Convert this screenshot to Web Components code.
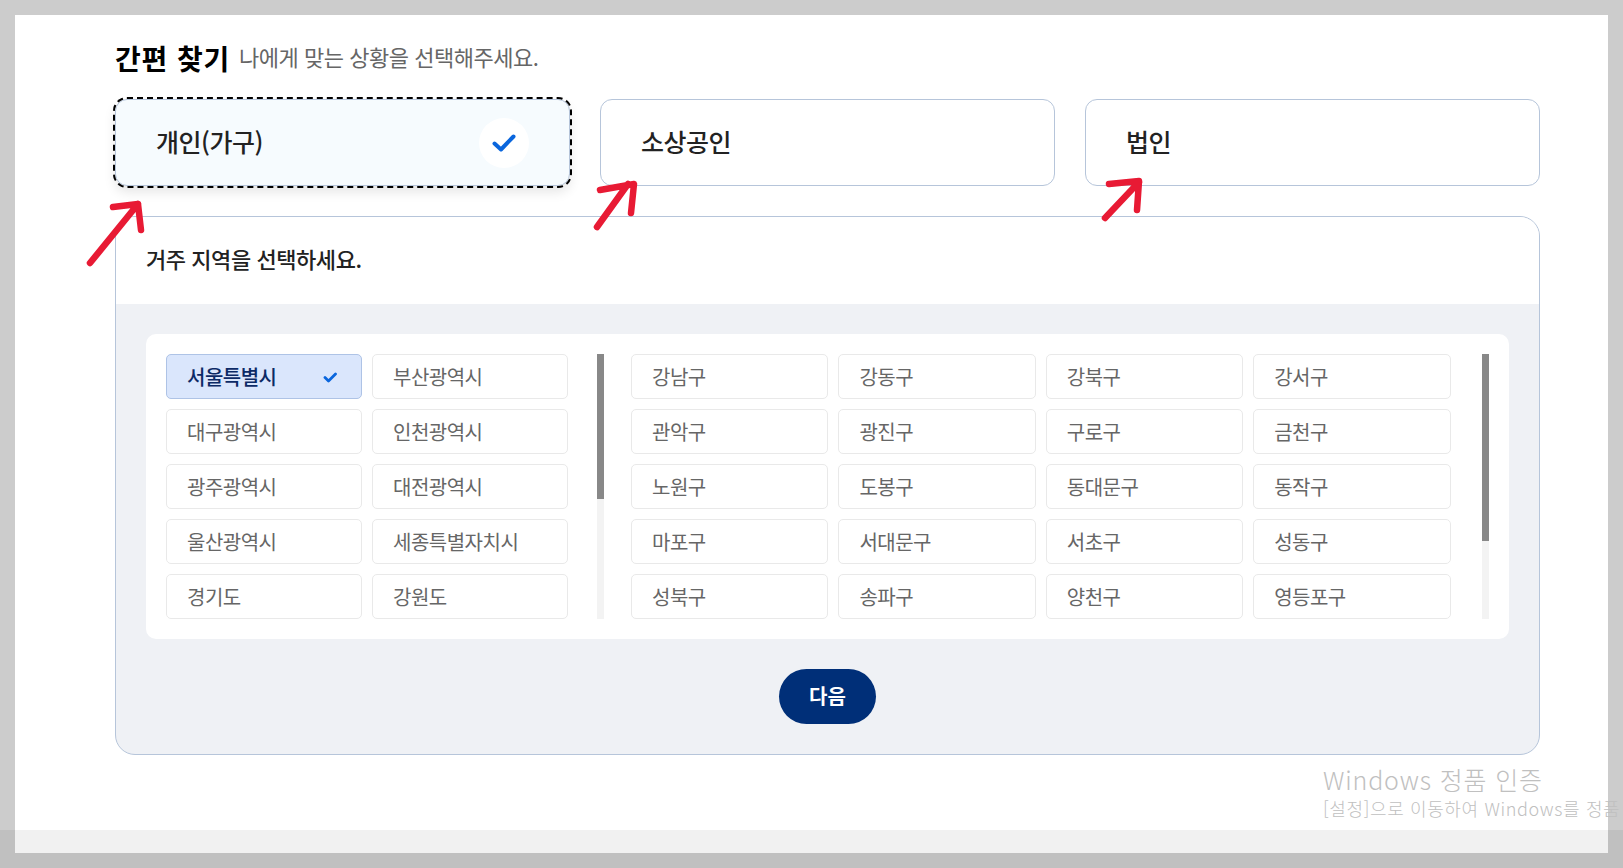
<!DOCTYPE html>
<html lang="ko"><head><meta charset="utf-8"><title>간편 찾기</title>
<style>
html,body{margin:0;padding:0}
body{width:1623px;height:868px;overflow:hidden;background:#ccc;font-family:"Noto Sans CJK KR","Noto Sans",sans-serif;position:relative}
</style></head><body>
<app-page>
  <page-title slot="title" heading="간편 찾기">나에게 맞는 상황을 선택해주세요.</page-title>
  <type-card slot="cards" selected>개인(가구)</type-card>
  <type-card slot="cards">소상공인</type-card>
  <type-card slot="cards">법인</type-card>
  <region-panel slot="panel" heading="거주 지역을 선택하세요."></region-panel>
</app-page>
<arrow-mark style="left:85px;top:198px" d="M5 65L53 6M28 9L53 6L56 32"></arrow-mark>
<arrow-mark style="left:590px;top:178px" d="M7 49L38 6M10 12L44 6L41 35"></arrow-mark>
<arrow-mark style="left:1098px;top:175px" d="M7 43L41 7M11 9L41 6L39 35"></arrow-mark>
<win-mark></win-mark>
<script>
function el(name,render){customElements.define(name,class extends HTMLElement{connectedCallback(){if(!this.shadowRoot){this.attachShadow({mode:"open"}).innerHTML=render(this)}}})}
el("app-page",()=>`<style>
:host{display:block;box-sizing:border-box;width:1623px;height:868px;padding:15px}
.sheet{box-sizing:border-box;height:838px;background:#fff;padding:20px 68px 0 100px;display:flex;flex-direction:column}
.cards{display:flex;gap:30px;margin-top:19px}
.panel{margin-top:30px}
</style><div class="sheet"><slot name="title"></slot><div class="cards"><slot name="cards"></slot></div><div class="panel"><slot name="panel"></slot></div></div>`);
el("page-title",h=>`<style>
:host{display:flex;align-items:center;height:45px;gap:9px;white-space:nowrap}
h2{margin:0;font-size:28px;font-weight:700;color:#000;letter-spacing:.03em;line-height:40px}
span{font-size:22px;color:#666;letter-spacing:-.022em;line-height:40px;margin-bottom:3px}
</style><h2>${h.getAttribute("heading")}</h2><span><slot></slot></span>`);
el("type-card",h=>{const s=h.hasAttribute("selected");return `<style>
:host{display:block;flex:1 1 0;min-width:0}
.c{box-sizing:border-box;height:87px;display:flex;align-items:center;justify-content:space-between;padding:0 40px;border:1px solid #b6c5da;border-radius:12px;background:${s?"#f6fbfe":"#fff"};font-size:25px;font-weight:500;color:#222;letter-spacing:-.02em;${s?"outline:2px dashed #000;outline-offset:0;box-shadow:0 6px 12px rgba(0,0,0,.1);":""}}
.c span{margin-bottom:4px}
.k{width:50px;height:50px;border-radius:50%;background:#fff;display:flex;align-items:center;justify-content:center}
</style><div class="c"><span><slot></slot></span>${s?`<div class="k"><svg width="26" height="20" viewBox="0 0 26 20" fill="none" stroke="#0a66dd" stroke-width="4" stroke-linecap="round" stroke-linejoin="round"><path d="M3.5 10.5L10 16.5L22.5 3.5"/></svg></div>`:""}</div>`});
el("region-panel",h=>`<style>
:host{display:block}
.box{box-sizing:border-box;height:539px;border:1px solid #b6c5da;border-radius:20px;overflow:hidden;background:#eff1f5;display:flex;flex-direction:column}
h3{box-sizing:border-box;margin:0;height:87px;flex:none;background:#fff;padding:0 30px 6px;display:flex;align-items:center;font-size:22px;font-weight:500;color:#222;letter-spacing:-.02em}
.body{padding:30px;display:flex;flex-direction:column;align-items:center}
.inner{box-sizing:border-box;align-self:stretch;height:305px;border-radius:10px;background:#fff;padding:20px;display:flex;gap:27px}
next-button{margin-top:30px}
</style><div class="box"><h3>${h.getAttribute("heading")}</h3><div class="body"><div class="inner">
<scroll-list style="width:438px;--cols:2;--pad:29px" thumb="145" items="서울특별시*,부산광역시,대구광역시,인천광역시,광주광역시,대전광역시,울산광역시,세종특별자치시,경기도,강원도"></scroll-list>
<scroll-list style="flex:1;--cols:4;--pad:31.5px" thumb="187" items="강남구,강동구,강북구,강서구,관악구,광진구,구로구,금천구,노원구,도봉구,동대문구,동작구,마포구,서대문구,서초구,성동구,성북구,송파구,양천구,영등포구"></scroll-list>
</div><next-button>다음</next-button></div></div>`);
el("scroll-list",h=>`<style>
:host{display:flex;min-width:0;height:265px}
.g{flex:1;min-width:0;display:grid;grid-template-columns:repeat(var(--cols),1fr);grid-auto-rows:45px;gap:10px;padding-right:var(--pad)}
.track{flex:none;width:7px;background:#f3f3f3}
.thumb{height:${h.getAttribute("thumb")}px;background:#888}
</style><div class="g">${h.getAttribute("items").split(",").map(t=>t.endsWith("*")?`<region-item selected>${t.slice(0,-1)}</region-item>`:`<region-item>${t}</region-item>`).join("")}</div><div class="track"><div class="thumb"></div></div>`);
el("region-item",h=>{const s=h.hasAttribute("selected");return `<style>
:host{display:block;min-width:0}
.b{box-sizing:border-box;height:45px;display:flex;align-items:center;justify-content:space-between;padding:0 24px 0 20px;border:1px solid ${s?"#aec3e6":"#e9e9e9"};border-radius:5px;background:${s?"#dae6fc":"#fff"};font-size:20px;font-weight:${s?500:400};color:${s?"#0c2a66":"#666"};white-space:nowrap;letter-spacing:-.5px}
svg{margin-top:1px}
</style><div class="b"><span><slot></slot></span>${s?`<svg width="16" height="13" viewBox="0 0 16 13" fill="none" stroke="#0a66dd" stroke-width="2.8" stroke-linecap="round" stroke-linejoin="round"><path d="M4 6.5L7.5 10L14.5 3"/></svg>`:""}</div>`});
el("next-button",()=>`<style>
:host{display:block}
.n{box-sizing:border-box;width:97px;height:55px;border-radius:28px;background:#002f78;color:#fff;display:flex;align-items:center;justify-content:center;font-size:20px;font-weight:700}
span{margin-bottom:2px}
</style><div class="n"><span><slot></slot></span></div>`);
el("arrow-mark",h=>`<style>:host{position:absolute;display:block;width:64px;height:72px}svg{display:block}</style><svg width="64" height="72" viewBox="0 0 64 72" fill="none" stroke="#e81a34" stroke-width="6.5" stroke-linecap="round" stroke-linejoin="round"><path d="${h.getAttribute("d")}"/></svg>`);
el("win-mark",()=>`<style>
:host{position:absolute;left:0;top:830px;width:1623px;height:38px;background:rgba(0,0,0,.055);display:block}
.t{position:absolute;left:1323px;white-space:nowrap;color:#c0c0c0;font-weight:300;font-family:"Noto Sans CJK KR","Noto Sans",sans-serif}
.a{top:-67px;font-size:25px;line-height:32px;letter-spacing:.033em}
.b{top:-34px;font-size:18px;line-height:24px;letter-spacing:.035em}
</style><div class="t a">Windows 정품 인증</div><div class="t b">[설정]으로 이동하여 Windows를 정품</div>`);
</script>
</body></html>
